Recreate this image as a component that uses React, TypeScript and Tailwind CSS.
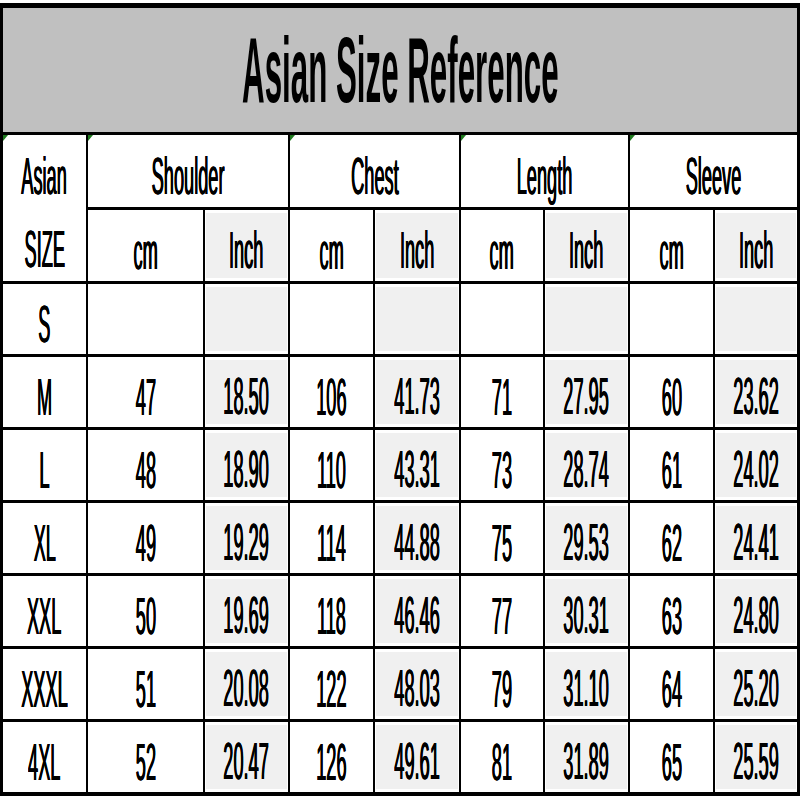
import React from 'react';

const rows = [
  { size: 'S', values: ['', '', '', '', '', '', '', ''] },
  { size: 'M', values: ['47', '18.50', '106', '41.73', '71', '27.95', '60', '23.62'] },
  { size: 'L', values: ['48', '18.90', '110', '43.31', '73', '28.74', '61', '24.02'] },
  { size: 'XL', values: ['49', '19.29', '114', '44.88', '75', '29.53', '62', '24.41'] },
  { size: 'XXL', values: ['50', '19.69', '118', '46.46', '77', '30.31', '63', '24.80'] },
  { size: 'XXXL', values: ['51', '20.08', '122', '48.03', '79', '31.10', '64', '25.20'] },
  { size: '4XL', values: ['52', '20.47', '126', '49.61', '81', '31.89', '65', '25.59'] },
];

const groups = ['Shoulder', 'Chest', 'Length', 'Sleeve'];

function Label({ children }: { children: React.ReactNode }) {
  return (
    <span className="inline-block whitespace-nowrap scale-x-[0.35] text-[52px] leading-none text-black [text-shadow:0.8px_0_0_#000,-0.8px_0_0_#000]">
      {children}
    </span>
  );
}

// little green comment marker in the top-left corner of a cell
function Marker() {
  return (
    <svg className="absolute left-0 top-0" width="5" height="6" viewBox="0 0 5 6">
      <polygon points="0,0 5,0 0,6" fill="#1f7a1f" />
    </svg>
  );
}

function Cell({ text, gray }: { text: string; gray: boolean }) {
  if (gray) {
    return (
      <div className="bg-white px-[1px] py-[3px]">
        <div className="flex h-full items-center justify-center bg-[#f0f0f0] pt-[8px]">
          <Label>{text}</Label>
        </div>
      </div>
    );
  }
  return (
    <div className="flex items-center justify-center bg-white pt-[10px]">
      <Label>{text}</Label>
    </div>
  );
}

export default function App() {
  return (
    <div className="h-[800px] w-[800px] bg-white pt-[3px] font-['Liberation_Sans',Arial,sans-serif]">
      <div className="grid grid-cols-[83px_115px_83px_83px_84px_82px_83px_83px_82px] grid-rows-[124px_72px_71px_repeat(7,70px)] gap-x-[2px] gap-y-[3px] bg-black pb-[4px] pl-[3px] pr-[3px] pt-[5px]">
        <div className="col-span-9 flex items-center justify-center bg-[#c0c0c0]">
          <span className="inline-block whitespace-nowrap scale-x-[0.34] text-[92px] font-bold leading-none text-black">
            Asian Size Reference
          </span>
        </div>

        <div className="relative row-span-2 flex flex-col bg-white">
          <Marker />
          <div className="flex h-[72px] items-center justify-center pt-[10px]">
            <Label>Asian</Label>
          </div>
          <div className="flex flex-1 items-center justify-center pt-[10px]">
            <Label>SIZE</Label>
          </div>
        </div>

        {groups.map((g) => (
          <div key={g} className="relative col-span-2 flex items-center justify-center bg-white pt-[10px]">
            <Marker />
            <Label>{g}</Label>
          </div>
        ))}

        {groups.map((g) => (
          <React.Fragment key={g + '-units'}>
            <Cell text="cm" gray={false} />
            <Cell text="Inch" gray={true} />
          </React.Fragment>
        ))}

        {rows.map((row) => (
          <React.Fragment key={row.size}>
            <Cell text={row.size} gray={false} />
            {row.values.map((v, i) => (
              <Cell key={i} text={v} gray={i % 2 === 1} />
            ))}
          </React.Fragment>
        ))}
      </div>
    </div>
  );
}
